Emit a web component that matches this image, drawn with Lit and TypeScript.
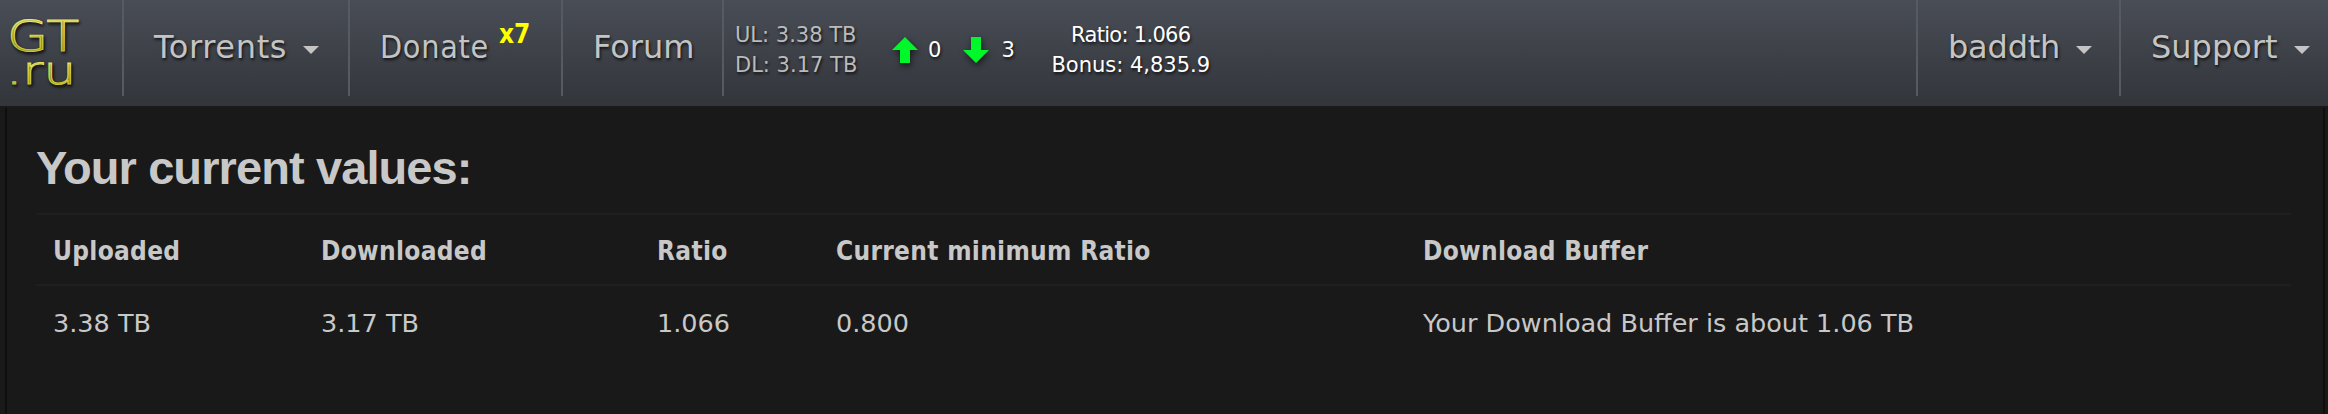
import { LitElement, html, css } from "lit";
import { customElement } from "lit/decorators.js";

@customElement("app-root")
export class AppRoot extends LitElement {
  static styles = css`
    :host { display: block; width: 2328px; height: 414px; overflow: hidden; background: #191919;
      font-family: "DejaVu Sans", sans-serif; color: #c8c8c8; }
    nav { height: 106px; display: flex; background: linear-gradient(#494d56, #32353a); box-sizing: border-box; }
    .item { height: 96px; box-sizing: border-box; border-left: 2px solid #565a62; display: flex; align-items: center;
      font-size: 32px; color: #c4c4c4; text-shadow: 1px 2px 3px rgba(0,0,0,.75); padding-bottom: 2px; white-space: nowrap; }
    .logo { width: 122px; flex: none; border-left: 0; }
    .logo svg { display: block; }
    .torrents { width: 226px; padding-left: 30px; letter-spacing: .66px; }
    .donate { width: 213px; padding-left: 30px; }
    .donate span { font-stretch: condensed; letter-spacing: .7px; }
    .forum { width: 161px; padding-left: 30px; }
    .stats { flex: 1; padding-left: 11px; font-size: 21px; padding-top: 6px; }
    .user { width: 203px; padding-left: 30px; letter-spacing: -.2px; }
    .support { width: 209px; padding-left: 30px; }
    .caret { width: 0; height: 0; border: 8px solid transparent; border-top: 8px solid #c4c4c4; border-bottom: 0; margin-left: 16px; margin-top: 5px; }
    sup { font-size: 26px; font-stretch: condensed; font-weight: 700; color: #ff0; align-self: flex-start; margin: 20px 0 0 10px; line-height: 28px; text-shadow: none; }
    .tot { width: 118px; line-height: 30px; color: #bbb; }
    .tot div { white-space: nowrap; }
    .arrow { display: flex; align-items: center; margin-left: 39px; color: #fff; gap: 10px; }
    .arrow + .arrow { margin-left: 22px; gap: 12px; }
    .arrow svg { filter: drop-shadow(1px 3px 3px rgba(0,0,0,.6)); display: block; }
    .ratio { width: 190px; margin-left: 21px; text-align: center; line-height: 30px; color: #fff; white-space: nowrap; }
    .ratio .tight { letter-spacing: -.7px; }
    main { margin: 2px 3px 0 5px; height: 306px; background: #191919; padding: 0 32px 0 29px; box-sizing: border-box;
      border-left: 2px solid #0e0e0e; border-right: 2px solid #0e0e0e; }
    h1 { margin: 0; font: 700 47px/120px "Liberation Sans", sans-serif; color: #c8c8c8; height: 107px; letter-spacing: -.9px; box-sizing: border-box; border-bottom: 2px solid #1f1f23; }
    .row { display: grid; grid-template-columns: 268px 336px 179px 587px 1fr; padding-left: 17px; height: 71px; align-items: center; font-size: 25.5px; box-sizing: border-box; white-space: nowrap; }
    .head { font-size: 26px; font-weight: 700; font-stretch: condensed; letter-spacing: .3px; border-bottom: 2px solid #1f1f23; padding-top: 3px; }
    .vals { padding-top: 2px; }
  `;
  render() {
    const caret = html`<span class="caret"></span>`;
    return html`
      <nav>
        <div class="item logo">
          <svg width="122" height="96" viewBox="0 0 122 96">
            <defs><linearGradient id="g" x1="0" x2="0" y1="0" y2="1"><stop offset="0" stop-color="#f4f27a"/><stop offset="1" stop-color="#bdbb1e"/></linearGradient></defs>
            <text x="7" y="52" font-family="DejaVu Sans" font-weight="200" font-size="42" textLength="72" lengthAdjust="spacingAndGlyphs" fill="url(#g)" stroke="url(#g)" stroke-width="1">GT</text>
            <text x="6" y="85" font-family="DejaVu Sans" font-weight="200" font-size="38" textLength="70" lengthAdjust="spacingAndGlyphs" fill="url(#g)" stroke="url(#g)" stroke-width="1">.ru</text>
          </svg>
        </div>
        <div class="item torrents">Torrents${caret}</div>
        <div class="item donate"><span>Donate</span><sup>x7</sup></div>
        <div class="item forum">Forum</div>
        <div class="item stats">
          <div class="tot"><div>UL: 3.38 TB</div><div>DL: 3.17 TB</div></div>
          <div class="arrow"><svg width="26" height="26" viewBox="0 0 26 26"><path d="M13 0 26 13H18V26H8V13H0Z" fill="#00f72a"/></svg>0</div>
          <div class="arrow"><svg width="26" height="26" viewBox="0 0 26 26"><path d="M8 0H18V13H26L13 26 0 13H8Z" fill="#00f72a"/></svg>3</div>
          <div class="ratio"><div class="tight">Ratio: 1.066</div><div>Bonus: 4,835.9</div></div>
        </div>
        <div class="item user">baddth${caret}</div>
        <div class="item support">Support${caret}</div>
      </nav>
      <main>
        <h1>Your current values:</h1>
        <div class="row head"><div>Uploaded</div><div>Downloaded</div><div>Ratio</div><div>Current minimum Ratio</div><div>Download Buffer</div></div>
        <div class="row vals"><div>3.38 TB</div><div>3.17 TB</div><div>1.066</div><div>0.800</div><div>Your Download Buffer is about 1.06 TB</div></div>
      </main>
    `;
  }
}
